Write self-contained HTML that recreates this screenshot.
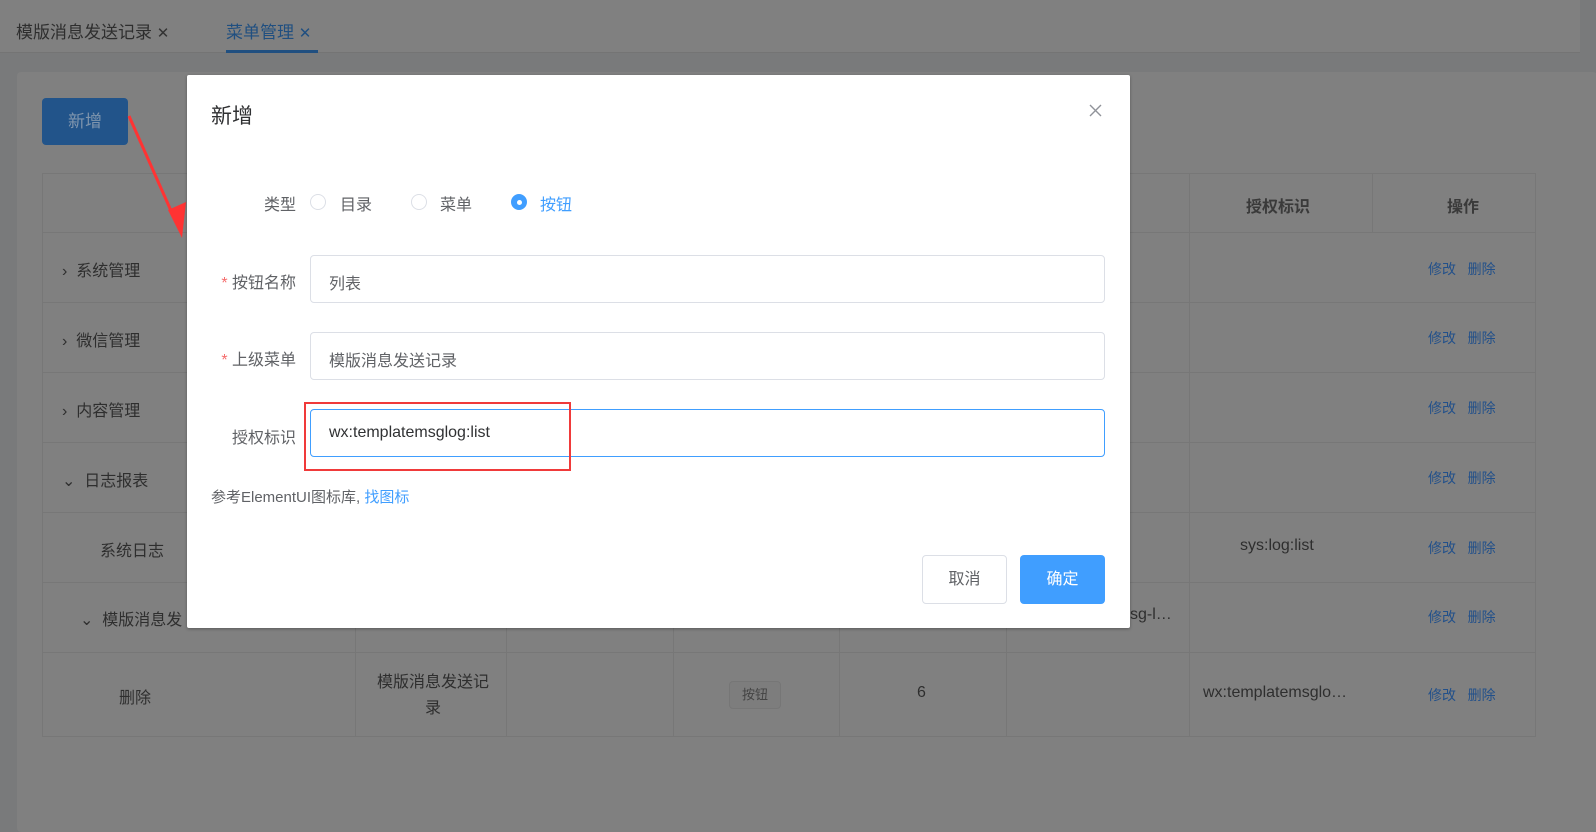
<!DOCTYPE html>
<html><head><meta charset="utf-8"><style>
*{box-sizing:border-box;margin:0;padding:0}
body{width:1596px;height:823px;overflow:hidden;background:#797a7b;font-family:"Liberation Sans","Noto Sans CJK SC",sans-serif;position:relative;color:#303133}
.abs{position:absolute}
.tabs{left:0;top:0;width:1580px;height:53px;background:#808080;border-bottom:1px solid #747474}
.card{left:17px;top:72px;width:1580px;height:760px;background:#808080;border-radius:4px}
.t{font-size:16px;color:#2e2e2e}
.vl{position:absolute;width:1px;background:#777}
.hl{position:absolute;height:1px;background:#777;left:42px;width:1494px}
.op{position:absolute;font-size:14px;color:#22508a}
.dlg{left:187px;top:75px;width:943px;height:553px;background:#fff;border-radius:2px;box-shadow:0 1px 3px rgba(0,0,0,.3)}
.lbl{position:absolute;font-size:16px;color:#606266;text-align:right;width:90px}
.inp{position:absolute;left:123px;width:795px;height:48px;border:1px solid #dcdfe6;border-radius:4px;font-size:16px;color:#606266;padding:14px 18px}
.rad{position:absolute;width:16px;height:16px;border:1px solid #dcdfe6;border-radius:50%}
</style></head><body>
<div class="abs tabs"></div>
<div class="abs t" style="left:16px;top:18px;font-size:17px">模版消息发送记录 <span style="color:#333;font-size:15px">✕</span></div>
<div class="abs" style="left:226px;top:18px;font-size:17px;color:#204f80">菜单管理 <span style="font-size:15px">✕</span></div>
<div class="abs" style="left:226px;top:50px;width:92px;height:3px;background:#204f80"></div>
<div class="abs card"></div>
<div class="abs" style="left:42px;top:98px;width:86px;height:47px;background:#22548a;border-radius:4px;color:#7f95ad;font-size:17px;text-align:center;line-height:47px">新增</div>
<div class="abs" style="left:42px;top:173px;width:1494px;height:564px;border:1px solid #777"></div>
<div class="hl" style="top:232px"></div><div class="hl" style="top:302px"></div><div class="hl" style="top:372px"></div><div class="hl" style="top:442px"></div><div class="hl" style="top:512px"></div><div class="hl" style="top:582px"></div><div class="hl" style="top:652px"></div>
<div class="vl" style="left:355px;top:582px;height:155px"></div>
<div class="vl" style="left:506px;top:582px;height:155px"></div>
<div class="vl" style="left:673px;top:582px;height:155px"></div>
<div class="vl" style="left:839px;top:582px;height:155px"></div>
<div class="vl" style="left:1006px;top:582px;height:155px"></div>
<div class="vl" style="left:1189px;top:173px;height:564px"></div>
<div class="vl" style="left:1372px;top:173px;height:59px"></div>
<div class="abs" style="left:1246px;top:193px;font-size:16px;font-weight:bold;color:#3a3a3a">授权标识</div>
<div class="abs" style="left:1447px;top:193px;font-size:16px;font-weight:bold;color:#3a3a3a">操作</div>
<div class="abs t" style="left:62px;top:257px">›&nbsp; 系统管理</div>
<div class="abs t" style="left:62px;top:327px">›&nbsp; 微信管理</div>
<div class="abs t" style="left:62px;top:397px">›&nbsp; 内容管理</div>
<div class="abs t" style="left:62px;top:467px">⌄&nbsp; 日志报表</div>
<div class="abs t" style="left:100px;top:537px">系统日志</div>
<div class="abs t" style="left:80px;top:606px">⌄&nbsp; 模版消息发</div>
<div class="abs t" style="left:1130px;top:606px">sg-l…</div>
<div class="abs t" style="left:119px;top:684px">删除</div>
<div class="abs t" style="left:371px;top:670px;line-height:26px;width:124px;text-align:center">模版消息发送记录</div>
<div class="abs" style="left:729px;top:681px;width:52px;height:28px;border:1px solid #767676;border-radius:4px;background:#7d7d7d;font-size:13px;color:#444;text-align:center;line-height:26px">按钮</div>
<div class="abs t" style="left:917px;top:684px">6</div>
<div class="abs t" style="left:1240px;top:537px">sys:log:list</div>
<div class="abs t" style="left:1203px;top:684px">wx:templatemsglo…</div>
<div class="op" style="left:1428px;top:259px">修改 &nbsp; 删除</div>
<div class="op" style="left:1428px;top:328px">修改 &nbsp; 删除</div>
<div class="op" style="left:1428px;top:398px">修改 &nbsp; 删除</div>
<div class="op" style="left:1428px;top:468px">修改 &nbsp; 删除</div>
<div class="op" style="left:1428px;top:538px">修改 &nbsp; 删除</div>
<div class="op" style="left:1428px;top:607px">修改 &nbsp; 删除</div>
<div class="op" style="left:1428px;top:685px">修改 &nbsp; 删除</div>
<svg class="abs" style="left:120px;top:110px" width="80" height="140"><line x1="9" y1="6" x2="56" y2="112" stroke="#f33" stroke-width="3"/><polygon points="48,100 66,92 62,128" fill="#f33"/></svg>
<div class="abs dlg">
<div class="abs" style="left:24px;top:25px;font-size:21px;color:#303133">新增</div>
<svg class="abs" style="left:902px;top:29px" width="13" height="13"><path d="M1 1L12 12M12 1L1 12" stroke="#909399" stroke-width="1.4"/></svg>
<div class="lbl" style="left:19px;top:116px">类型</div>
<div class="rad" style="left:123px;top:119px"></div><div class="abs" style="left:153px;top:116px;font-size:16px;color:#606266">目录</div>
<div class="rad" style="left:224px;top:119px"></div><div class="abs" style="left:253px;top:116px;font-size:16px;color:#606266">菜单</div>
<div class="rad" style="left:324px;top:119px;background:#409eff;border-color:#409eff"><div style="width:5px;height:5px;background:#fff;border-radius:50%;margin:4.5px"></div></div><div class="abs" style="left:353px;top:116px;font-size:16px;color:#409eff">按钮</div>
<div class="lbl" style="left:19px;top:194px"><span style="color:#f56c6c">*</span> 按钮名称</div>
<div class="inp" style="top:180px">列表</div>
<div class="lbl" style="left:19px;top:271px"><span style="color:#f56c6c">*</span> 上级菜单</div>
<div class="inp" style="top:257px">模版消息发送记录</div>
<div class="lbl" style="left:19px;top:349px">授权标识</div>
<div class="inp" style="top:334px;border-color:#409eff;color:#303133">wx:templatemsglog:list</div>
<div class="abs" style="left:117px;top:327px;width:267px;height:69px;border:2px solid #f03a3a"></div>
<div class="abs" style="left:24px;top:411px;font-size:15px;color:#606266">参考ElementUI图标库, <span style="color:#409eff">找图标</span></div>
<div class="abs" style="left:735px;top:480px;width:85px;height:49px;border:1px solid #dcdfe6;border-radius:4px;font-size:16px;color:#606266;text-align:center;line-height:47px">取消</div>
<div class="abs" style="left:833px;top:480px;width:85px;height:49px;background:#409eff;border-radius:4px;font-size:16px;color:#fff;text-align:center;line-height:49px">确定</div>
</div>
</body></html>
